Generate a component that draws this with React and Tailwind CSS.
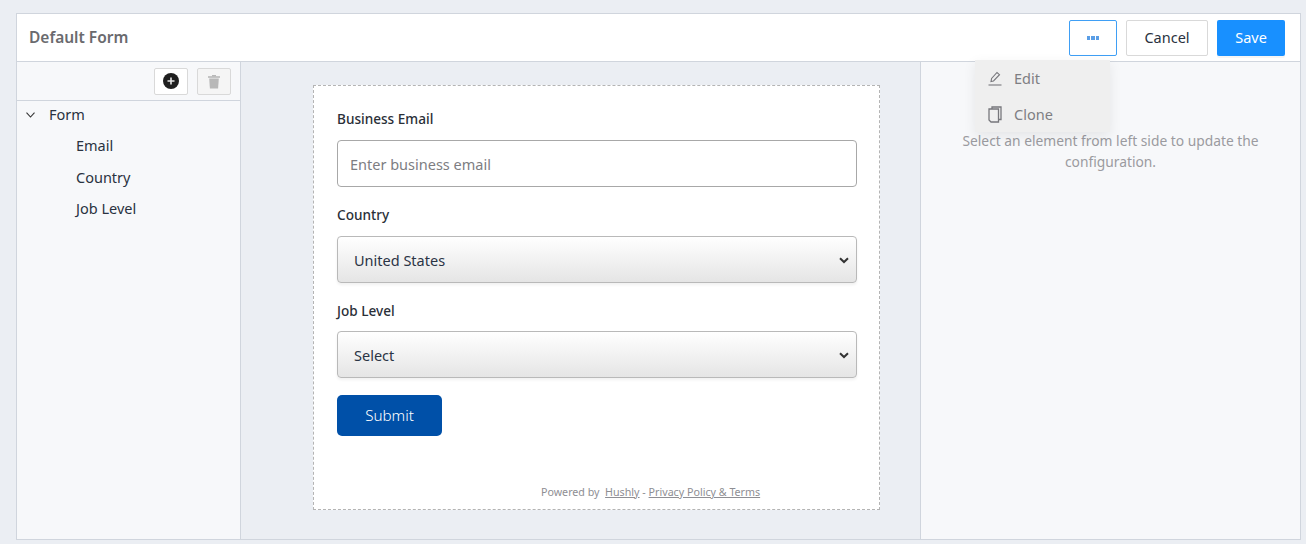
import React from "react";

const F = { fontFamily: '"Noto Sans", "Open Sans", sans-serif' };

function Chevron() {
  return (
    <svg className="absolute right-[7px] top-[20px]" width="10" height="7" viewBox="0 0 10 7" fill="none">
      <path d="M1 1.2 L5 5 L9 1.2" stroke="#333" strokeWidth="2" />
    </svg>
  );
}

function Sel({ children }) {
  return (
    <div className="relative h-[47px] w-[520px] rounded-[4px] border border-[#b9b9b9] bg-gradient-to-b from-[#ffffff] to-[#e5e5e5] pl-[16px] text-[14.5px] leading-[46px] text-[#2b3445] shadow-[0_2px_3px_rgba(0,0,0,0.06)]">
      {children}
      <Chevron />
    </div>
  );
}

export default function App() {
  return (
    <div style={F} className="h-[544px] w-[1306px] overflow-hidden bg-[#ebeef3] pl-[16px] pr-[5px] pt-[13px] pb-[4px]">
      <div className="relative flex h-[527px] flex-col border border-[#d0d5dd] bg-white">
        <div className="flex h-[48px] shrink-0 items-center justify-between border-b border-[#d0d5dd] bg-white pl-[12px] pr-[15px]">
          <div className="text-[15.5px] font-semibold text-[#6a6a6e]">Default Form</div>
          <div className="flex items-center">
            <button className="flex h-[36px] w-[48px] items-center justify-center gap-[1px] rounded-[2px] border border-[#3f9ff5] bg-white">
              <span className="h-[4px] w-[3.5px] bg-[#5a9ee6]" />
              <span className="h-[4px] w-[3.5px] bg-[#5a9ee6]" />
              <span className="h-[4px] w-[3.5px] bg-[#5a9ee6]" />
            </button>
            <button className="ml-[9px] h-[36px] w-[82px] rounded-[2px] border border-[#d9d9d9] bg-white text-[14.5px] text-[#2a3240]">Cancel</button>
            <button className="ml-[9px] h-[36px] w-[68px] rounded-[2px] bg-[#1890ff] text-[14.5px] text-white shadow-[0_2px_0_rgba(0,0,0,0.04)]">Save</button>
          </div>
        </div>

        <div className="flex min-h-0 flex-1">
          <div className="w-[224px] shrink-0 border-r border-[#d0d5dd] bg-[#f7f8fa]">
            <div className="flex h-[39px] items-center justify-end gap-[9px] border-b border-[#d0d5dd] pr-[9px]">
              <button className="flex h-[27px] w-[34px] items-center justify-center rounded-[2px] border border-[#d9d9d9] bg-white">
                <svg width="16" height="16" viewBox="0 0 16 16">
                  <circle cx="8" cy="8" r="8" fill="#1f1f1f" />
                  <path d="M8 4.5v7M4.5 8h7" stroke="#e8e8e8" strokeWidth="1.6" />
                </svg>
              </button>
              <button className="flex h-[27px] w-[34px] items-center justify-center rounded-[2px] border border-[#d9d9d9] bg-[#f5f5f5]">
                <svg width="14" height="15" viewBox="0 0 14 15" fill="#b8b8b8">
                  <path d="M1 2.2h12v1.6H1z" />
                  <path d="M5 1h4v1.5H5z" />
                  <path d="M2.2 4.5h9.6l-.7 10H2.9z" />
                </svg>
              </button>
            </div>
            <div className="text-[14.5px] text-[#2a3240]">
              <div className="flex h-[28px] items-center pl-[9px]">
                <svg width="9" height="6" viewBox="0 0 9 6" fill="none">
                  <path d="M0.5 0.7 L4.5 5 L8.5 0.7" stroke="#333" strokeWidth="1.1" />
                </svg>
                <span className="ml-[14px]">Form</span>
              </div>
              <div className="flex h-[32px] items-center pl-[59px] pt-[2px]">Email</div>
              <div className="flex h-[31px] items-center pl-[59px] pt-[2px]">Country</div>
              <div className="flex h-[32px] items-center pl-[59px] pt-[2px]">Job Level</div>
            </div>
          </div>

          <div className="flex flex-1 justify-start bg-[#ebeef3] pl-[72px] pt-[23px]">
            <div className="relative h-[425px] w-[567px] border border-dashed border-[#b4b4b4] bg-white pl-[23px] pt-[22px]">
              <div className="text-[13.6px] font-medium leading-[22px] text-[#2a2f38]">Business Email</div>
              <div className="mt-[10px] flex h-[47px] w-[520px] items-center rounded-[4px] border border-[#a8a8a8] bg-white pl-[12px] pt-[2px] text-[14.5px] text-[#7d7d82]">Enter business email</div>
              <div className="mt-[17px] text-[13.6px] font-medium leading-[22px] text-[#2a2f38]">Country</div>
              <div className="mt-[10px]"><Sel>United States</Sel></div>
              <div className="mt-[17px] text-[13.6px] font-medium leading-[22px] text-[#2a2f38]">Job Level</div>
              <div className="mt-[9px]"><Sel>Select</Sel></div>
              <button className="mt-[17px] h-[41px] w-[105px] rounded-[5px] bg-[#0050a8] text-[15.2px] font-light text-white">Submit</button>
              <div className="absolute bottom-[9px] left-[227px] text-[10.7px] text-[#8e8e93]">
                Powered by&nbsp; <span className="underline">Hushly</span> - <span className="underline">Privacy Policy &amp; Terms</span>
              </div>
            </div>
          </div>

          <div className="w-[380px] shrink-0 border-l border-[#d0d5dd] bg-[#f7f8fa] px-[30px] pt-[68px] text-center text-[13.8px] leading-[21px] text-[#9b9ba0]">
            Select an element from left side to update the configuration.
          </div>
        </div>

        <div className="absolute left-[958px] top-[46px] w-[135px] bg-[#efefef] text-[14.5px] text-[#7e7e83] shadow-[0_4px_12px_rgba(0,0,0,0.08)]">
          <div className="flex h-[36px] items-center pl-[13px] pt-[1px]">
            <svg width="14" height="15" viewBox="0 0 14 15" fill="none" stroke="#77777c" strokeWidth="1.1">
              <path d="M3 10.5 L3.6 7.5 L9 1.5 L11.5 3.7 L5.5 10 Z" />
              <path d="M0.5 14h13" />
            </svg>
            <span className="ml-[12px]">Edit</span>
          </div>
          <div className="flex h-[36px] items-center pl-[13px] pt-[1px]">
            <svg width="14" height="17" viewBox="0 0 14 17" fill="none" stroke="#77777c" strokeWidth="1.3">
              <path d="M4 3V1h9v12.500h-2" />
              <path d="M1 3h9.500v13H3l-2-2z" />
            </svg>
            <span className="ml-[12px]">Clone</span>
          </div>
        </div>
      </div>
    </div>
  );
}
